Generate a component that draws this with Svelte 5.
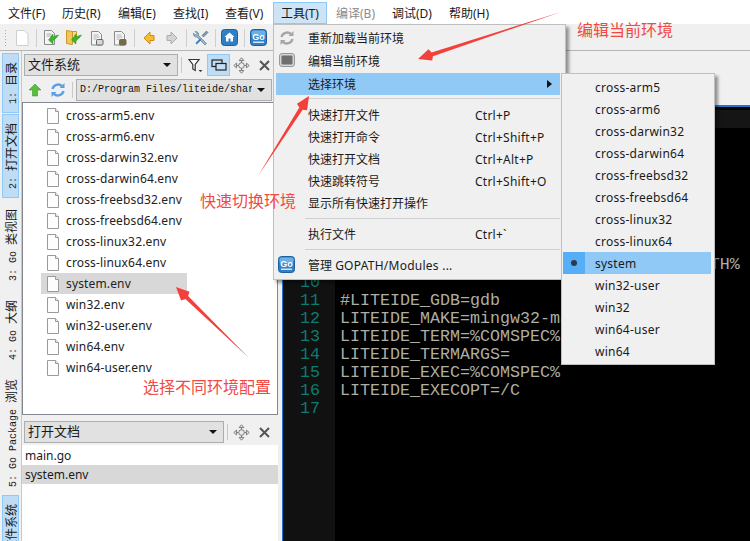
<script>
  const menus = [
    ["文件(F)", 8], ["历史(R)", 62], ["编辑(E)", 118], ["查找(I)", 173], ["查看(V)", 225],
    ["工具(T)", 281], ["编译(B)", 336], ["调试(D)", 392], ["帮助(H)", 449]
  ];
  const files = [
    "cross-arm5.env", "cross-arm6.env", "cross-darwin32.env", "cross-darwin64.env",
    "cross-freebsd32.env", "cross-freebsd64.env", "cross-linux32.env", "cross-linux64.env",
    "system.env", "win32.env", "win32-user.env", "win64.env", "win64-user.env"
  ];
  const envs = [
    "cross-arm5", "cross-arm6", "cross-darwin32", "cross-darwin64", "cross-freebsd32",
    "cross-freebsd64", "cross-linux32", "cross-linux64", "system", "win32-user",
    "win32", "win64-user", "win64"
  ];
  const quick = [
    ["快速打开文件", "Ctrl+P"],
    ["快速打开命令", "Ctrl+Shift+P"],
    ["快速打开文档", "Ctrl+Alt+P"],
    ["快速跳转符号", "Ctrl+Shift+O"],
    ["显示所有快速打开操作", ""]
  ];
  const tabs = [
    { no: "1: ", cjk: "目录", on: true },
    { no: "2: ", cjk: "打开文档", on: true, cls: "t2" },
    { no: "3: Go ", cjk: "类视图", cls: "t3" },
    { no: "4: Go ", cjk: "大纲", cls: "t4" },
    { no: "5: Go Package ", cjk: "浏览", cls: "t5" },
    { no: "6: ", cjk: "文件系统", on: true, cls: "t6" }
  ];
  const lines = [
    "", "", "", "", "", "", "", "",
    "PATH=%LITEIDE_BIN%;%GOROOT%\\bin;%GOPATH%",
    "",
    "#LITEIDE_GDB=gdb",
    "LITEIDE_MAKE=mingw32-make",
    "LITEIDE_TERM=%COMSPEC%",
    "LITEIDE_TERMARGS=",
    "LITEIDE_EXEC=%COMSPEC%",
    "LITEIDE_EXECOPT=/C",
    ""
  ];

  // tapered hand-drawn style arrow, thin at the tail
  function arrow(tx, ty, hx, hy) {
    const len = Math.hypot(tx - hx, ty - hy);
    const dx = (tx - hx) / len;
    const dy = (ty - hy) / len;
    const nx = -dy;
    const ny = dx;
    const bx = hx + dx * 15;
    const by = hy + dy * 15;
    const pt = (x, y, w) => `${(x + nx * w).toFixed(1)} ${(y + ny * w).toFixed(1)}`;
    return `M${tx} ${ty}L${pt(bx, by, 2)}L${pt(bx + dx * -2, by + dy * -2, 6)}L${hx} ${hy}L${pt(bx + dx * -2, by + dy * -2, -6)}L${pt(bx, by, -2)}Z`;
  }
</script>

{#snippet page()}
  <svg class="ficon" width="14" height="16" viewBox="0 0 14 16">
    <path d="M1.500.5h8l3 3v12h-11z" fill="#fdfdfd" stroke="#9a9a9a" />
    <path d="M9.500.5v3h3" fill="#eee" stroke="#9a9a9a" />
  </svg>
{/snippet}

{#snippet goIcon()}
  <svg width="17" height="17" viewBox="0 0 17 17">
    <rect x=".5" y=".5" width="16" height="16" rx="3" fill="#2f80c8" stroke="#1d5f9e" />
    <rect x="1.500" y="1.500" width="14" height="6" rx="2" fill="#6cb0e6" />
    <text x="8.500" y="10.500" class="go">Go</text>
    <rect x="3" y="12.500" width="11" height="1.500" fill="#cfe5f7" />
  </svg>
{/snippet}

{#snippet greenArrow()}
  <path d="M6.500 11l4.500-6v3q3-1.500 5.500-2-1.500 3-5.500 5.500v3.500z" fill="#3cb52e" stroke="#23901f" stroke-width=".5" />
{/snippet}

{#snippet docGray(fill)}
  <path d="M2.500 1.500h7l3 3v10.500h-10z" fill="#f4f4f4" stroke="#8a8a8a" />
  <path d="M4.500 5h5M4.500 7h6M4.500 9h3" stroke="#b5b5b5" />
  <rect x="7.500" y="9.500" width="6.500" height="5.500" rx="1" fill={fill} stroke="#666" />
{/snippet}

{#snippet moveIcon()}
  <svg width="17" height="17" viewBox="0 0 17 17" fill="#ececec" stroke="#7a7a7a">
    <path d="M8.500.8l2.400 2.800H6.100zM8.500 16.200l2.400-2.800H6.100zM.8 8.500l2.800-2.400v4.800zM16.200 8.500l-2.800-2.400v4.800z" />
    <circle cx="8.500" cy="8.500" r="2.800" />
    <path d="M8.500 3.600v2M8.500 11.400v2M3.600 8.500h2M11.400 8.500h2" />
  </svg>
{/snippet}

{#snippet closeIcon()}
  <svg width="11" height="11" viewBox="0 0 11 11">
    <path d="M1 1l9 9M10 1l-9 9" stroke="#555" stroke-width="2" />
  </svg>
{/snippet}

{#snippet reloadIcon(color)}
  <svg class="reload" width="16" height="16" viewBox="0 0 16 16" fill="none" stroke={color} stroke-width="2.400">
    <path d="M2.500 7a5.800 5.800 0 0 1 9.500-3" />
    <path d="M13.500 9a5.800 5.800 0 0 1-9.500 3" />
    <path d="M14.500 1v5h-5zM1.500 15v-5h5z" fill={color} stroke="none" />
  </svg>
{/snippet}

<div class="window">
  <div class="menubar">
    {#each menus as [label, x]}
      <span
        class="menu"
        class:open={label === "工具(T)"}
        class:off={label === "编译(B)"}
        style="left: {x}px">{label}</span
      >
    {/each}
  </div>

  <div class="toolbar">
    <span class="grip"></span>
    <span class="tool">
      <svg width="14" height="16" viewBox="0 0 14 16"><path d="M1.500.5h8l3.500 3.500v11.500h-11.500z" fill="#fff" stroke="#cfcfcf" /></svg>
    </span>
    <span class="tsep"></span>
    <span class="tool">
      <svg width="17" height="17" viewBox="0 0 17 17">
        <path d="M2.500 1.500h7l3 3v11h-10z" fill="#f6f6f6" stroke="#8a8a8a" />
        <path d="M4.500 5h5M4.500 7h6" stroke="#aaa" />
        {@render greenArrow()}
      </svg>
    </span>
    <span class="tool">
      <svg width="17" height="17" viewBox="0 0 17 17">
        <path d="M1.500 1.500l6 1v13l-6-1z" fill="#f3c552" stroke="#c79a2c" />
        <path d="M7.500 2.500h4v9h-4z" fill="#f8dc88" stroke="#c79a2c" />
        {@render greenArrow()}
      </svg>
    </span>
    <span class="tool">
      <svg width="16" height="16" viewBox="0 0 16 16">{@render docGray("#d8d8d8")}</svg>
    </span>
    <span class="tool">
      <svg width="16" height="16" viewBox="0 0 16 16">{@render docGray("#7a6a3a")}</svg>
    </span>
    <span class="tsep"></span>
    <span class="tool">
      <svg width="12" height="14" viewBox="0 0 12 14"><path d="M7 1L1 7l6 6V9.500h4v-5H7z" fill="#f7bd2a" stroke="#d08a18" /></svg>
    </span>
    <span class="tool">
      <svg width="12" height="14" viewBox="0 0 12 14"><path d="M5 1l6 6-6 6V9.500H1v-5h4z" fill="#d4d4d4" stroke="#ababab" /></svg>
    </span>
    <span class="tsep"></span>
    <span class="tool">
      <svg width="16" height="16" viewBox="0 0 16 16">
        <path d="M13.500 1L9 5.500l1.500 1.500L15 2.500z" fill="#7c96b0" stroke="#4e6a86" stroke-width=".6" />
        <path d="M2 1.500a3 3 0 0 1 3.500 4l8 8-1.500 1.500-8-8a3 3 0 0 1-3.500-3.800l2 1.800 1.500-1.500z" fill="#9ab1c6" stroke="#56708a" stroke-width=".6" />
        <path d="M7 8.500l-4.500 4.500 1.200 1.500 4.600-4.500z" fill="#3f7cc0" />
      </svg>
    </span>
    <span class="tsep"></span>
    <span class="tool">
      <svg width="17" height="17" viewBox="0 0 17 17">
        <rect x=".5" y=".5" width="16" height="16" rx="3" fill="#2f7fc6" stroke="#1d5f9e" />
        <path d="M8.500 3.500l5 4.500h-1.500v4.500h-2.500v-3h-2v3h-2.500v-4.500h-1.500z" fill="#fff" />
      </svg>
    </span>
    <span class="tsep"></span>
    <span class="tool">{@render goIcon()}</span>
  </div>

  <div class="main">
    <div class="tabs">
      {#each tabs as t}
        <span class="tab {t.cls ?? ''}" class:on={t.on}>{t.no}<b>{t.cjk}</b></span>
      {/each}
    </div>

    <div class="side">
      <div class="panelbar">
        <div class="combo first">文件系统<i class="caret"></i></div>
        <span class="psep"></span>
        <span class="pbtn">
          <svg width="16" height="15" viewBox="0 0 16 15">
            <path d="M1 1.500h10l-3.800 5v6l-2.400-1.500v-4.500z" fill="#fff" stroke="#333" stroke-width="1.200" />
            <path d="M10.500 12h4l-2 2z" fill="#333" />
          </svg>
        </span>
        <span class="pbtn active">
          <svg width="16" height="12" viewBox="0 0 16 12" fill="none" stroke="#222" stroke-width="1.200">
            <rect x="1" y="1" width="10" height="6.500" />
            <rect x="5" y="4.500" width="10" height="6.500" fill="#c4dff6" />
          </svg>
        </span>
        <span class="pbtn">{@render moveIcon()}</span>
        <span class="pbtn">{@render closeIcon()}</span>
      </div>

      <div class="pathbar">
        <svg class="up" width="14" height="14" viewBox="0 0 14 14">
          <path d="M7 1l6 6H9.500v6h-5V7H1z" fill="#58bf3c" stroke="#3d9a2a" stroke-width=".6" />
        </svg>
        {@render reloadIcon("#5a9fe6")}
        <span class="psep"></span>
        <div class="combo path"><span class="clip">D:/Program Files/liteide/share/liteide</span><i class="caret"></i></div>
      </div>

      <div class="filelist">
        {#each files as f}
          <div class="file" class:sel={f === "system.env"}>
            {@render page()}
            <span>{f}</span>
          </div>
        {/each}
      </div>

      <div class="panelbar second">
        <div class="combo wide">打开文档<i class="caret"></i></div>
        <span class="psep"></span>
        <span class="pbtn">{@render moveIcon()}</span>
        <span class="pbtn">{@render closeIcon()}</span>
      </div>

      <div class="doclist">
        <div class="doc">main.go</div>
        <div class="doc sel">system.env</div>
      </div>
    </div>

    <div class="right">
      <div class="blank"></div>
      <div class="editor">
        <div class="gutter">
          {#each lines as _, i}
            <div class="num">{i + 1}</div>
          {/each}
        </div>
        <div class="code">
          {#each lines as l, i}
            <div class="ln" class:cur={i === 0}>{l}</div>
          {/each}
        </div>
      </div>
    </div>
  </div>

  <div class="popup tools">
    <div class="item">
      <span class="mi">{@render reloadIcon("#a5a5a5")}</span>
      重新加载当前环境
    </div>
    <div class="item">
      <svg class="mi" width="16" height="14" viewBox="0 0 16 14">
        <rect x=".5" y=".5" width="15" height="13" rx="2.500" fill="#d5d5d5" stroke="#999" />
        <rect x="2.500" y="2.500" width="11" height="9" rx="1" fill="#6f6f6f" />
      </svg>
      编辑当前环境
    </div>
    <div class="item hl">选择环境<i class="more"></i></div>
    <div class="sep one"></div>
    {#each quick as [name, key]}
      <div class="item row">{name}<span class="key">{key}</span></div>
    {/each}
    <div class="sep two"></div>
    <div class="item row">执行文件<span class="key">Ctrl+`</span></div>
    <div class="sep three"></div>
    <div class="item"><span class="mi go-mi">{@render goIcon()}</span>管理 <span class="latin">GOPATH/Modules ...</span></div>
  </div>

  <div class="popup envs">
    {#each envs as e}
      <div class="env" class:hl={e === "system"}>
        <span class="check">{#if e === "system"}<i class="dot"></i>{/if}</span>
        <span>{e}</span>
      </div>
    {/each}
  </div>

  <svg class="arrows" width="750" height="541" viewBox="0 0 750 541">
    <path d={arrow(561, 12, 418, 59)} />
    <path d={arrow(258, 176, 309, 96)} />
    <path d={arrow(249, 358, 176, 287)} />
  </svg>
  <span class="note n1">编辑当前环境</span>
  <span class="note n2">快速切换环境</span>
  <span class="note n3">选择不同环境配置</span>
</div>

<style>
  :global(body) {
    margin: 0;
    background: #f0f0f0;
  }

  .window {
    position: relative;
    width: 750px;
    height: 541px;
    overflow: hidden;
    display: flex;
    flex-direction: column;
    background: #f0f0f0;
    color: #1a1a1a;
    font: 12px "Noto Sans", "Noto Sans CJK SC", sans-serif;
  }

  .menubar {
    position: relative;
    z-index: 0;
    height: 24px;
    flex: none;
    background: #fff;
  }

  .menu {
    position: absolute;
    top: 5px;
    line-height: 18px;
    white-space: nowrap;
  }

  .menu.open::before {
    content: "";
    position: absolute;
    inset: -3px -8px -1px -8px;
    background: #cde4f7;
    border: 1px solid #90c8f6;
    z-index: -1;
  }

  .menu.off {
    color: #8a8a8a;
  }

  .toolbar {
    height: 25px;
    padding-top: 1px;
    flex: none;
    display: flex;
    align-items: center;
    border-bottom: 1px solid #b5b5b5;
  }

  .grip {
    width: 10px;
    height: 17px;
    background: radial-gradient(circle, #a8a8a8 1px, transparent 1px) 4px 0 / 3px 3px repeat-y;
  }

  .tool {
    width: 23px;
    display: flex;
    justify-content: center;
    align-items: center;
  }

  .tsep {
    width: 1px;
    height: 18px;
    margin: 0 2.5px;
    background: #cfcfcf;
  }

  .main {
    flex: 1;
    display: flex;
    min-height: 0;
  }

  .tabs {
    width: 22px;
    flex: none;
    overflow: hidden;
    padding: 2px 0 0 2px;
    box-sizing: border-box;
    border-right: 1px solid #c8c8c8;
  }

  .tab {
    display: block;
    box-sizing: content-box;
    width: 17px;
    padding: 9px 0;
    writing-mode: vertical-rl;
    text-orientation: sideways;
    transform: rotate(180deg);
    font: 10px/17px "Liberation Mono", monospace;
    white-space: pre;
  }

  .tab b {
    font: 12px/17px "Noto Sans CJK SC", sans-serif;
  }

  .tab.on {
    width: 15px;
    padding: 8px 0;
    background: #bfdcf5;
    border: 1px solid #90c8f6;
    line-height: 15px;
  }

  .tab.on b {
    line-height: 15px;
  }

  .t2 { margin-top: 1px; }
  .t3 { margin-top: 2px; }
  .t4 { margin-top: 1px; }
  .t5 { margin-top: 1px; }
  .t6 { margin-top: -1px; }

  .side {
    width: 260px;
    flex: none;
    display: flex;
    flex-direction: column;
  }

  .panelbar {
    height: 28px;
    flex: none;
    display: flex;
    align-items: center;
    padding-left: 2px;
  }

  .combo {
    position: relative;
    box-sizing: border-box;
    height: 22px;
    background: #e1e1e1;
    border: 1px solid #adadad;
    padding-left: 3px;
    line-height: 19px;
    font-size: 13px;
    flex: none;
  }

  .combo.first {
    width: 154px;
  }

  .combo.wide {
    width: 200px;
  }

  .caret {
    position: absolute;
    right: 6px;
    top: 8px;
    border: 4px solid transparent;
    border-top: 4px solid #111;
    border-bottom: 0;
  }

  .psep {
    width: 1px;
    height: 16px;
    background: #c8c8c8;
    margin: 0 2px 0 3px;
    flex: none;
  }

  .pbtn {
    box-sizing: border-box;
    width: 23px;
    height: 22px;
    display: flex;
    align-items: center;
    justify-content: center;
    flex: none;
  }

  .pbtn.active {
    background: #bfdcf5;
    border: 1px solid #90c8f6;
  }

  .pathbar {
    height: 23px;
    flex: none;
    display: flex;
    align-items: center;
    margin-top: -1px;
  }

  .up {
    margin-left: 6px;
  }

  .pathbar .reload {
    margin: 0 6px 0 8px;
  }

  .pathbar .psep {
    margin: 0;
  }

  .combo.path {
    width: 196px;
    margin-left: 3px;
    font: 10px/20px "Liberation Mono", monospace;
    color: #111;
  }

  .clip {
    display: block;
    width: 172px;
    overflow: hidden;
    white-space: nowrap;
  }

  .filelist {
    box-sizing: border-box;
    width: 256px;
    height: 313px;
    margin-top: 1px;
    flex: none;
    background: #fff;
    border: 1px solid #828790;
    padding: 2px 0 0 18px;
  }

  .file {
    display: flex;
    align-items: center;
    width: 146px;
    height: 21px;
    gap: 6px;
    padding-left: 5px;
    box-sizing: border-box;
    color: #222;
    letter-spacing: 0.15px;
  }

  .file.sel,
  .doc.sel {
    background: #d8d8d8;
  }

  .ficon {
    flex: none;
    margin-top: 1px;
  }

  .second {
    margin-top: 4px;
    height: 26px;
  }

  .doclist {
    flex: 1;
    width: 256px;
    background: #fff;
    padding-top: 1px;
  }

  .doc {
    height: 19px;
    line-height: 19px;
    padding-left: 3px;
  }

  .right {
    flex: 1;
    display: flex;
    flex-direction: column;
    min-width: 0;
  }

  .blank {
    height: 54px;
    flex: none;
    border-bottom: 2px solid #1f76c8;
  }

  .editor {
    flex: 1;
    display: flex;
    background: #000;
    border-left: 1px solid #1f76c8;
    padding-top: 3px;
    font: 16.67px/21px "Liberation Mono", monospace;
    overflow: hidden;
  }

  .gutter {
    width: 52px;
    flex: none;
    background: #111;
    margin-top: -3px;
    padding: 3px 15px 0 0;
    text-align: right;
    box-sizing: border-box;
    color: #0b7d70;
  }

  .num {
    height: 18px;
  }

  .code {
    flex: 1;
    min-width: 0;
  }

  .ln {
    height: 18px;
    padding-left: 5px;
    color: #aeaea2;
    white-space: pre;
  }

  .ln.cur {
    background: #151515;
  }

  .popup {
    position: absolute;
    box-sizing: border-box;
    background: #f0f0f0;
    border: 1px solid #bfbfbf;
    box-shadow: 3px 3px 3px rgba(0, 0, 0, 0.4);
  }

  .tools {
    left: 273px;
    top: 24px;
    width: 293px;
    height: 256px;
    padding: 2px 5px 0 2px;
  }

  .item {
    position: relative;
    height: 22px;
    line-height: 24px;
    padding-left: 32px;
    margin-bottom: 1px;
    white-space: nowrap;
  }

  .item.row {
    margin-bottom: 0;
  }

  .item.hl,
  .env.hl {
    background: #90c8f6;
  }

  .mi {
    position: absolute;
    left: 3px;
    top: 3px;
    line-height: 0;
  }

  .go-mi {
    left: 2px;
    top: 2px;
  }

  .key,
  .latin {
    letter-spacing: 0.25px;
  }

  .key {
    position: absolute;
    left: 199px;
  }

  .more {
    position: absolute;
    right: 8px;
    top: 7px;
    border: 4px solid transparent;
    border-left: 5px solid #111;
    border-right: 0;
  }

  .sep {
    height: 1px;
    background: #d0d0d0;
    margin-left: 29px;
  }

  .sep.one { margin-top: 3px; margin-bottom: 5px; }
  .sep.two { margin-top: 4px; margin-bottom: 4px; }
  .sep.three { margin-top: 4px; margin-bottom: 4px; }

  .envs {
    left: 561px;
    top: 73px;
    width: 154px;
    height: 292px;
    padding: 2px 3px 0 1px;
  }

  .env {
    display: flex;
    align-items: center;
    height: 22px;
    white-space: nowrap;
    letter-spacing: 0.25px;
  }

  .env span:last-child {
    padding-top: 1px;
  }

  .check {
    width: 22px;
    height: 22px;
    margin-right: 10px;
    display: flex;
    align-items: center;
    justify-content: center;
    flex: none;
  }

  .env.hl .check {
    background: #55aef6;
  }

  .dot {
    width: 6px;
    height: 6px;
    border-radius: 50%;
    background: #2e3a46;
  }

  .arrows {
    position: absolute;
    left: 0;
    top: 0;
    pointer-events: none;
    fill: #f4403a;
  }

  .note {
    position: absolute;
    font: 16px/22px "Noto Sans CJK SC", sans-serif;
    color: #f04a44;
    white-space: nowrap;
  }

  .n1 { left: 577px; top: 18px; }
  .n2 { left: 200px; top: 189px; }
  .n3 { left: 143px; top: 375px; }

  .go {
    font: bold 9px "Liberation Sans", sans-serif;
    fill: #fff;
    text-anchor: middle;
  }
</style>
